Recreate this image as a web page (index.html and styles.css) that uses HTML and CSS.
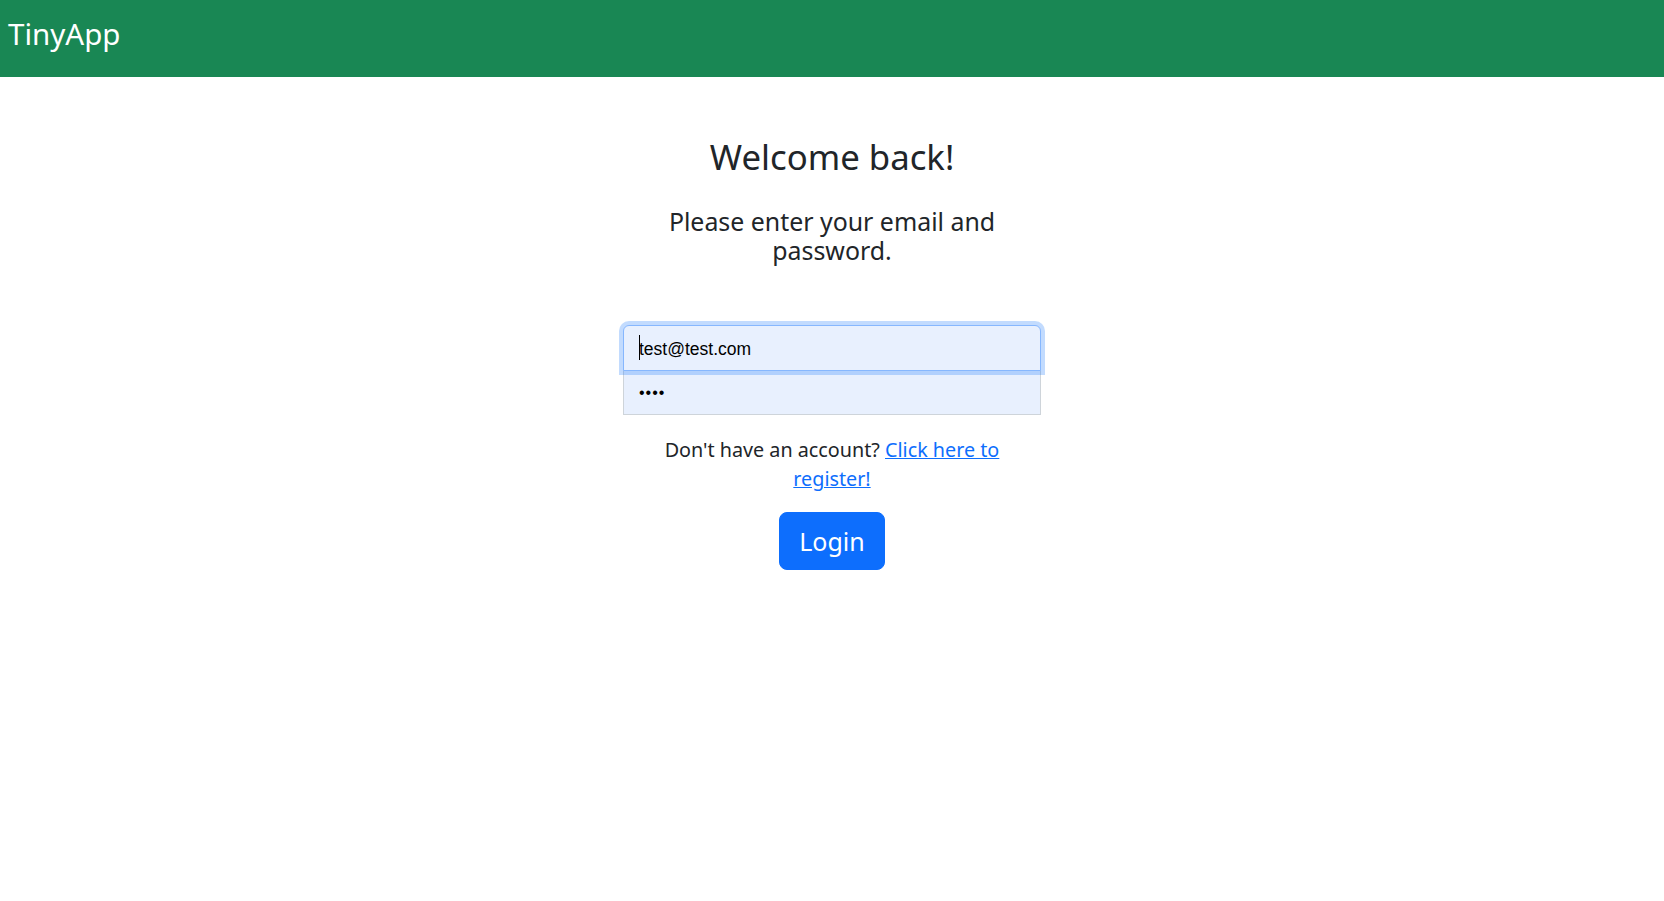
FILE: index.html
```html
<!DOCTYPE html>
<html lang="en">
<head>
<meta charset="utf-8">
<title>TinyApp - Login</title>
<link rel="stylesheet" href="styles.css">
</head>
<body>
<nav class="navbar">
  <a class="brand" href="#">TinyApp</a>
</nav>
<main class="main">
  <h2 class="title">Welcome back!</h2>
  <h4 class="subtitle">Please enter your email and password.</h4>
  <form class="login-form">
    <div class="field-wrap">
      <input class="field field-email is-focused" type="email" name="email" value="test@test.com">
      <span class="caret"></span>
    </div>
    <input class="field field-password" type="password" name="password" value="test">
    <p class="register">Don't have an account? <a class="register-link" href="#">Click here to register!</a></p>
    <button class="btn-login" type="button">Login</button>
  </form>
</main>
</body>
</html>
```

FILE: styles.css
```css
* {
  box-sizing: border-box;
}

body {
  margin: 0;
  font-family: "Noto Sans", "DejaVu Sans", sans-serif;
  color: #212529;
  background: #fff;
}

.navbar {
  height: 77px;
  background: #198754;
  padding: 13px 8px 0;
}

.brand {
  color: #fff;
  text-decoration: none;
  font-size: 29.5px;
  line-height: 42px;
}

.main {
  display: flex;
  flex-direction: column;
  align-items: center;
  text-align: center;
  padding-top: 60px;
}

.title {
  margin: 0;
  font-size: 34.75px;
  font-weight: 400;
  line-height: 40.8px;
}

.subtitle {
  width: 418px;
  margin: 29px 0 0;
  font-size: 24.9px;
  font-weight: 400;
  line-height: 28.8px;
}

.login-form {
  width: 418px;
  margin-top: 61px;
  display: flex;
  flex-direction: column;
  align-items: center;
}

.field-wrap {
  position: relative;
  width: 100%;
}

.field {
  display: block;
  width: 100%;
  height: 45px;
  padding: 0 15px;
  font-family: "Liberation Sans", Arial, sans-serif;
  font-size: 17.5px;
  color: #000;
  background: #e8f0fe;
  border: 1px solid #ced4da;
  outline: none;
}

.field-email {
  height: 46px;
  padding-top: 2px;
  border-radius: 6px 6px 0 0;
}

.field-email.is-focused {
  border-color: #86b7fe;
  box-shadow: 0 0 0 4px rgba(13, 110, 253, 0.25);
}

.caret {
  position: absolute;
  left: 16px;
  top: 10px;
  width: 1px;
  height: 25px;
  background: #000;
}

.field-password {
  height: 45px;
  margin-top: -1px;
  border-radius: 0;
  font-size: 16px;
  letter-spacing: 1px;
}

.register {
  max-width: 380px;
  margin: 20px 0 0;
  font-size: 19.75px;
  line-height: 29px;
}

.register-link {
  color: #0d6efd;
  text-decoration: underline;
}

.btn-login {
  margin-top: 19px;
  padding: 10px 19px;
  font-family: "Noto Sans", "DejaVu Sans", sans-serif;
  font-size: 25px;
  line-height: 36px;
  color: #fff;
  background: #0d6efd;
  border: 1px solid #0d6efd;
  border-radius: 8px;
}
```
